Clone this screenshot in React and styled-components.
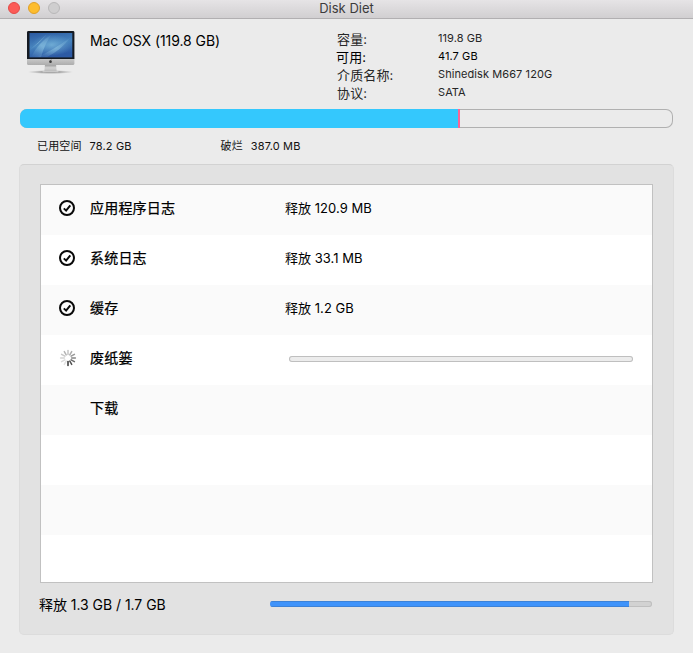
import React from "react";
import styled, { createGlobalStyle } from "styled-components";

const GlobalStyle = createGlobalStyle`
  * { box-sizing: border-box; }
  html, body { margin: 0; padding: 0; background: #ebebeb; overflow: hidden; }
`;

const Window = styled.div`
  display: flex;
  flex-direction: column;
  width: 693px;
  height: 653px;
  background: #ebebeb;
  color: #000;
  font-family: Inter, "Noto Sans CJK SC", sans-serif;
`;

const TitleBar = styled.header`
  display: grid;
  grid-template-columns: 100px 1fr 100px;
  height: 19px;
  background: linear-gradient(#e6e4e6, #d1cfd1);
  border-bottom: 1px solid #b1afb1;
`;

const Lights = styled.div`
  display: flex;
  gap: 8px;
  padding: 2px 0 0 8px;
`;

const Light = styled.span`
  width: 12px;
  height: 12px;
  border-radius: 50%;
  background: ${(p) => p.$fill};
  border: 1px solid ${(p) => p.$edge};
`;

const Title = styled.h1`
  margin: 0;
  font-size: 13px;
  font-weight: 400;
  line-height: 17px;
  letter-spacing: 0;
  text-align: center;
  color: #3c3b3c;
`;

const Header = styled.section`
  display: flex;
  height: 90px;
  padding: 11px 0 0 26px;
`;

const DiskName = styled.div`
  width: 246px;
  margin-left: 15px;
  font-size: 14px;
  line-height: 22px;
  letter-spacing: -0.07px;
  white-space: nowrap;
`;

const Specs = styled.dl`
  display: grid;
  grid-template-columns: 101px 1fr;
  grid-auto-rows: 18px;
  margin: -1px 0 0 1px;
`;

const SpecLabel = styled.dt`
  font-size: 13px;
  line-height: 20px;
  letter-spacing: 0.15px;
  white-space: nowrap;
  color: ${(p) => (p.$strong ? "#000" : "#262626")};
  margin-left: ${(p) => (p.$strong ? -1 : 0)}px;
`;

const SpecValue = styled.dd`
  margin: 0;
  font-size: 11px;
  line-height: 18px;
  letter-spacing: 0.08px;
  white-space: nowrap;
  color: ${(p) => (p.$strong ? "#000" : "#262626")};
`;

const Capacity = styled.div`
  display: flex;
  flex: none;
  width: 653px;
  height: 19px;
  margin-left: 20px;
  border-radius: 7px;
  overflow: hidden;
  box-shadow: inset 0 0 0 1px #b0b0b0;
`;

const Segment = styled.div`
  width: ${(p) => p.$width}px;
  background: ${(p) => p.$color};
`;

const Legend = styled.div`
  display: flex;
  height: 36px;
  padding: 9px 0 0 37px;
  font-size: 11px;
  line-height: 18px;
  color: #111;
`;

const LegendItem = styled.div`
  display: flex;
  gap: 8px;
  width: 183.5px;
  white-space: nowrap;
  letter-spacing: 0.15px;
`;

const Panel = styled.main`
  width: 655px;
  height: 471px;
  margin-left: 19px;
  padding: 19px 20px;
  background: #e2e2e2;
  border: 1px solid #dcdcdc;
  border-top-color: #d2d2d2;
  border-radius: 5px;
`;

const Table = styled.div`
  width: 613px;
  height: 399px;
  overflow: hidden;
  background: #fff;
  border: 1px solid #c1c1c1;
`;

const Row = styled.div`
  display: grid;
  grid-template-columns: 49px 195px 1fr;
  height: 50px;
  padding-top: 12px;
  line-height: 22px;
  &:nth-child(odd) { background: #fafafa; }
`;

const StatusCell = styled.div`
  padding: 2px 0 0 17px;
  svg { display: block; }
`;

const Name = styled.div`
  font-size: 14px;
  letter-spacing: 0.2px;
  -webkit-text-stroke: 0.25px #000;
`;

const Freed = styled.div`
  font-size: 13px;
  letter-spacing: 0.04px;
  white-space: nowrap;
`;

const Track = styled.div`
  width: ${(p) => p.$width}px;
  height: 6px;
  overflow: hidden;
  border-radius: 3px;
  background: ${(p) => p.$color};
  box-shadow: inset 0 0 0 1px #bfbfbf;
`;

const RowTrack = styled(Track)`
  margin: 9px 0 0 4px;
`;

const Fill = styled.div`
  width: ${(p) => p.$width}px;
  height: 6px;
  background: #3f93fa;
  border: solid #3c82d8;
  border-width: 1px 0;
`;

const Footer = styled.footer`
  display: flex;
  align-items: center;
  justify-content: space-between;
  height: 42px;
  width: 612px;
`;

const Total = styled.div`
  margin: 1px 0 0 -1px;
  font-size: 14px;
  line-height: 20px;
  letter-spacing: -0.04px;
  white-space: nowrap;
`;

function Computer() {
  return (
    <svg width="49" height="46" viewBox="0 0 49 46">
      <defs>
        <linearGradient id="screen" x1="0" y1="0" x2="0.3" y2="1">
          <stop offset="0" stopColor="#2a58a0" />
          <stop offset="0.55" stopColor="#4683bd" />
          <stop offset="1" stopColor="#2d5aa4" />
        </linearGradient>
        <linearGradient id="chin" x1="0" y1="0" x2="0" y2="1">
          <stop offset="0.7" stopColor="#dcdcdc" />
          <stop offset="1" stopColor="#adadad" />
        </linearGradient>
        <linearGradient id="stand" x1="0" y1="0" x2="0" y2="1">
          <stop offset="0" stopColor="#8d8d8d" />
          <stop offset="0.5" stopColor="#d2d2d2" />
          <stop offset="1" stopColor="#b8b8b8" />
        </linearGradient>
        <radialGradient id="shadow">
          <stop offset="0.3" stopColor="#777" />
          <stop offset="1" stopColor="#999" stopOpacity="0" />
        </radialGradient>
        <radialGradient id="glow">
          <stop offset="0" stopColor="#7db9dc" stopOpacity="0.75" />
          <stop offset="1" stopColor="#6aa8d4" stopOpacity="0" />
        </radialGradient>
        <linearGradient id="ray" x1="0" y1="1" x2="1" y2="0">
          <stop offset="0" stopColor="#a8dcf0" stopOpacity="0" />
          <stop offset="0.5" stopColor="#a8dcf0" stopOpacity="0.4" />
          <stop offset="1" stopColor="#a8dcf0" stopOpacity="0" />
        </linearGradient>
      </defs>
      <ellipse cx="24.5" cy="42" rx="23" ry="2" fill="url(#shadow)" opacity="0.75" />
      <path d="M19 34h11l.7 7.5h-12.4z" fill="url(#stand)" />
      <path d="M16.5 41h16v1.4h-16z" fill="#c9c9c9" />
      <rect x="1" y="1" width="47.4" height="34" rx="1.6" fill="url(#chin)" />
      <path d="M1 29V2.4Q1 1 2.4 1H47q1.4 0 1.4 1.4V29z" fill="#151a22" />
      <rect x="3.5" y="3" width="42.8" height="24.4" fill="url(#screen)" />
      <ellipse cx="26" cy="15" rx="20" ry="11" fill="url(#glow)" />
      <path d="M5 27Q12 13 26 4Q19 13 15 27z" fill="url(#ray)" />
      <path d="M11 27Q26 21 45 7Q35 20 21 27z" fill="url(#ray)" />
      <path d="M4 20Q14 12 21 4" fill="none" stroke="url(#ray)" strokeWidth="1" />
      <circle cx="24.5" cy="31.7" r="1.35" fill="#3b3b3b" />
      <path d="M24.5 30.5l.7-.9" stroke="#444" strokeWidth=".6" />
    </svg>
  );
}

function CheckIcon() {
  return (
    <svg width="18" height="18" viewBox="0 0 18 18" fill="none" stroke="#080808">
      <circle cx="9" cy="9" r="7" strokeWidth="2" />
      <path d="M5.8 9.4l2.3 2.2 4.2-5.2" strokeWidth="2" />
    </svg>
  );
}

const SPOKES = ["#c4c4c4", "#adadad", "#999", "#858585", "#6c6c6c", "#505050", "#333", "#e2e2e2", "#dcdcdc", "#d4d4d4", "#c8c8c8", "#b4b4b4"];

function Spinner() {
  return (
    <svg width="20" height="18" viewBox="0 0 20 18">
      {SPOKES.map((color, i) => (
        <path
          key={i}
          d="M10 1.6v3.8"
          stroke={color}
          strokeWidth="1.5"
          strokeLinecap="round"
          transform={`rotate(${i * 30} 10 9)`}
        />
      ))}
    </svg>
  );
}

const specs = [
  { label: "容量:", value: "119.8 GB" },
  { label: "可用:", value: "41.7 GB", strong: true },
  { label: "介质名称:", value: "Shinedisk M667 120G" },
  { label: "协议:", value: "SATA" },
];

const rows = [
  { name: "应用程序日志", freed: "释放 120.9 MB", status: "done" },
  { name: "系统日志", freed: "释放 33.1 MB", status: "done" },
  { name: "缓存", freed: "释放 1.2 GB", status: "done" },
  { name: "废纸篓", status: "busy" },
  { name: "下载" },
  {},
  {},
  {},
];

export default function App() {
  return (
    <>
      <GlobalStyle />
      <Window>
        <TitleBar>
          <Lights>
            <Light $fill="#fc5b57" $edge="#e34a48" />
            <Light $fill="#fdbd2e" $edge="#e0a028" />
            <Light $fill="#cfcecf" $edge="#b9b8b9" />
          </Lights>
          <Title>Disk Diet</Title>
        </TitleBar>
        <Header>
          <Computer />
          <DiskName>Mac OSX (119.8 GB)</DiskName>
          <Specs>
            {specs.map((s) => (
              <React.Fragment key={s.label}>
                <SpecLabel $strong={s.strong}>{s.label}</SpecLabel>
                <SpecValue $strong={s.strong}>{s.value}</SpecValue>
              </React.Fragment>
            ))}
          </Specs>
        </Header>
        <Capacity>
          <Segment $width={438} $color="#34c8fd" />
          <Segment $width={2} $color="#fc6495" />
        </Capacity>
        <Legend>
          <LegendItem><span>已用空间</span><span>78.2 GB</span></LegendItem>
          <LegendItem><span>破烂</span><span>387.0 MB</span></LegendItem>
        </Legend>
        <Panel>
          <Table>
            {rows.map((r, i) => (
              <Row key={i}>
                <StatusCell>
                  {r.status === "done" && <CheckIcon />}
                  {r.status === "busy" && <Spinner />}
                </StatusCell>
                <Name>{r.name}</Name>
                {r.status === "busy" ? (
                  <RowTrack $width={344} $color="#ececec" />
                ) : (
                  <Freed>{r.freed}</Freed>
                )}
              </Row>
            ))}
          </Table>
          <Footer>
            <Total>释放 1.3 GB / 1.7 GB</Total>
            <Track $width={382} $color="#d2d2d2"><Fill $width={359} /></Track>
          </Footer>
        </Panel>
      </Window>
    </>
  );
}
